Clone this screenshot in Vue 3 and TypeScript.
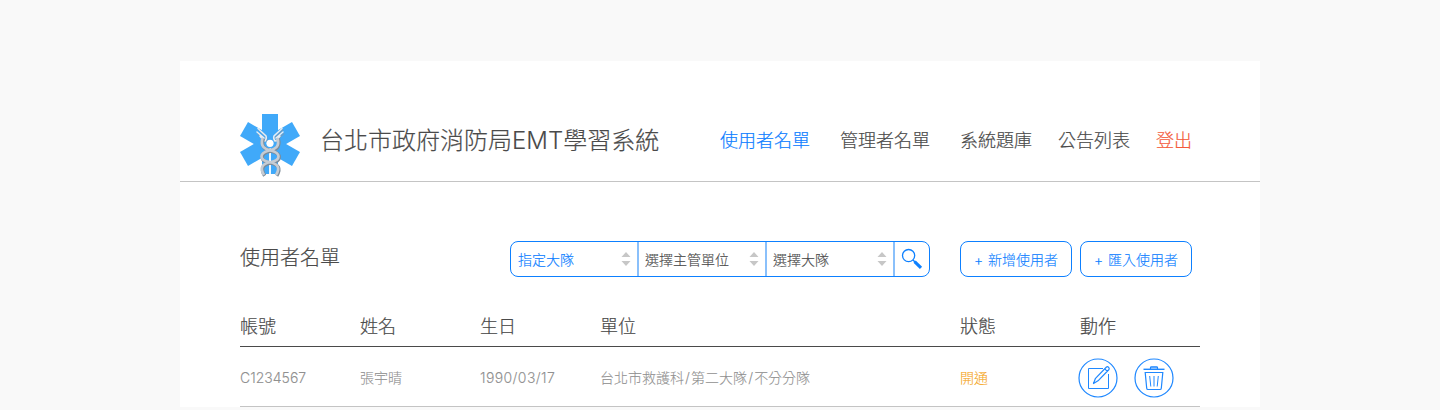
<script setup lang="ts">
interface NavItem { label: string; tone?: 'active' | 'danger' }
interface User { account: string; name: string; birthday: string; unit: string[]; status: string }

const navItems: NavItem[] = [
  { label: '使用者名單', tone: 'active' },
  { label: '管理者名單' },
  { label: '系統題庫' },
  { label: '公告列表' },
  { label: '登出', tone: 'danger' },
]
const filters = [
  { label: '指定大隊', active: true },
  { label: '選擇主管單位', active: false },
  { label: '選擇大隊', active: false },
]
const actions = ['新增使用者', '匯入使用者']
const columns = ['帳號', '姓名', '生日', '單位', '狀態', '動作']
const users: User[] = [
  { account: 'C1234567', name: '張宇晴', birthday: '1990/03/17', unit: ['台北市救護科', '第二大隊', '不分分隊'], status: '開通' },
]
</script>

<template>
  <main class="card">
    <header class="header">
      <svg class="logo" width="60" height="64" viewBox="0 0 60 64">
        <g fill="#40a9f9">
          <rect x="22" y="0" width="16" height="60" />
          <rect x="22" y="0" width="16" height="60" transform="rotate(60 30 30)" />
          <rect x="22" y="0" width="16" height="60" transform="rotate(-60 30 30)" />
        </g>
        <g fill="none" stroke-linecap="round">
          <g stroke="#6f9cc0" stroke-width="1.200" transform="translate(.8 .8)">
            <path d="M18 15L26 23V27M42 15L34 23V27M17 19L25 26M43 19L35 26" />
          </g>
          <g stroke="#e9edf2" stroke-width="1.500">
            <path d="M18 14.500L26 22Q27 24 25 27M17 18L24 24M20 22L24 27" />
            <path d="M42 14.500L34 22Q33 24 35 27M43 18L36 24M40 22L36 27" />
          </g>
          <path d="M30 35V60" stroke="#fff" stroke-width="1.800" />
          <g stroke="#7c8b98" stroke-width="3.500" stroke-linecap="butt" transform="translate(.7 .7)">
            <path d="M22.500 24C20 33 25 35 31 36.500C41 39 41 46 31 48C22 49.500 19.500 54 24 61" />
            <path d="M37.500 24C40 33 35 35 29 36.500C19 39 19 46 29 48C38 49.500 40.500 54 36 61" />
          </g>
          <g stroke="#c5ccd4" stroke-width="2.700" stroke-linecap="butt">
            <path d="M37.500 24C40 33 35 35 29 36.500C19 39 19 46 29 48C38 49.500 40.500 54 36 61" />
            <path d="M22.500 24C20 33 25 35 31 36.500C41 39 41 46 31 48C22 49.500 19.500 54 24 61" />
          </g>
        </g>
        <circle cx="30" cy="29.300" r="3.600" fill="#fff" />
      </svg>
      <h1 class="brand">台北市政府消防局<span class="latin">EMT</span>學習系統</h1>
      <nav class="nav">
        <a v-for="item in navItems" :key="item.label" :class="item.tone">{{ item.label }}</a>
      </nav>
    </header>

    <section class="content">
      <div class="toolbar">
        <h2>使用者名單</h2>
        <div class="filters">
          <div v-for="f in filters" :key="f.label" class="select" :class="{ active: f.active }">
            <span>{{ f.label }}</span>
            <svg width="10" height="14" viewBox="0 0 10 14" fill="#c7c7c7"><path d="M.5 5L5 0L9.500 5ZM.5 9H9.500L5 14Z" /></svg>
          </div>
          <button class="search" aria-label="搜尋">
            <svg width="22" height="22" viewBox="0 0 22 22" fill="none" stroke="#0d80ff">
              <circle cx="7.600" cy="7.600" r="6.100" stroke-width="1.300" />
              <path d="M12 12L14 14" stroke-width="1.500" /><path d="M13.600 13.600L20 19.800" stroke-width="3.200" />
            </svg>
          </button>
        </div>
        <div class="actions">
          <button v-for="a in actions" :key="a" class="action"><span class="plus">+</span>{{ a }}</button>
        </div>
      </div>

      <div class="row head"><span v-for="c in columns" :key="c">{{ c }}</span></div>
      <div v-for="u in users" :key="u.account" class="row body">
        <span>{{ u.account }}</span>
        <span>{{ u.name }}</span>
        <span class="date">{{ u.birthday }}</span>
        <span><template v-for="(part, i) in u.unit" :key="part"><span v-if="i" class="slash">/</span>{{ part }}</template></span>
        <span class="status">{{ u.status }}</span>
        <div class="icons">
          <svg width="40" height="40" viewBox="0 0 40 40" fill="none" stroke="#1f88ff">
            <circle cx="20" cy="20" r="19" stroke-width="1.200" />
            <path d="M25 10.500H10.500V30.500H30.500V16" />
            <path d="M15.500 25.500L17.500 20.300L28.500 9Q29.500 8.300 30.500 9.200Q31.700 10.300 31 11.500L20 22.800ZM26.800 10.800L29.300 13.300" stroke-linejoin="round" stroke-width="1.200" />
          </svg>
          <svg width="40" height="40" viewBox="0 0 40 40" fill="none" stroke="#1f88ff">
            <circle cx="20" cy="20" r="19" stroke-width="1.200" />
            <path d="M9.500 11.300H30.500" stroke-width="1.400" />
            <path d="M16.500 11V9.500Q16.500 8.800 17.500 8.800H22.500Q23.500 8.800 23.500 9.500V11" stroke-width="1.200" fill="#8abffb" />
            <path d="M11.200 14.500H28.800L27.300 30.200Q27.200 31.500 26 31.500H14Q12.800 31.500 12.700 30.200Z" stroke-width="1.200" />
            <path d="M15.700 18L16.800 28.500M20 18V28.500M24.300 18L23.200 28.500" />
          </svg>
        </div>
      </div>
    </section>
  </main>
</template>

<style>
body {
  margin: 0;
  background: #f9f9f9;
}
</style>

<style scoped>
.card {
  box-sizing: border-box;
  width: 1080px;
  height: 346px;
  margin: 61px auto 0;
  background: #fff;
  color: #4a4a4a;
  font-family: Inter, "Noto Sans CJK TC", sans-serif;
  font-weight: 300;
  -webkit-text-stroke: 0.2px currentColor;
}
.latin { -webkit-text-stroke: 0.1px currentColor; }
.header {
  box-sizing: border-box;
  display: flex;
  align-items: flex-start;
  height: 121px;
  padding: 53px 0 0 60px;
  border-bottom: 1px solid #c4c4c4;
}
.logo { flex: none; }
.brand {
  flex: none;
  width: 400px;
  margin: 9px 0 0 20px;
  font-size: 24px;
  font-weight: 300;
  line-height: 36px;
}
.nav {
  display: grid;
  grid-template-columns: 120px 120px 98px 98px auto;
  margin-top: 14px;
  font-size: 18px;
  line-height: 26px;
  white-space: nowrap;
}
.nav .active { color: #0d80ff; }
.nav .danger { color: #f4593a; }
.content { padding: 59px 60px 0; }
.toolbar {
  display: flex;
  height: 36px;
}
.toolbar h2 {
  width: 270px;
  margin: 0;
  font-size: 20px;
  font-weight: 300;
  line-height: 34px;
}
.filters {
  box-sizing: border-box;
  display: flex;
  width: 420px;
  border: 1px solid #0d80ff;
  border-radius: 8px;
}
.select {
  box-sizing: border-box;
  display: flex;
  align-items: center;
  justify-content: space-between;
  width: 128px;
  padding: 0 6px;
  border-right: 2px solid #8ac0fb;
  font-size: 14px;
  line-height: 34px;
  -webkit-text-stroke: 0.15px currentColor;
}
.select.active { padding-left: 7px; color: #0d80ff; }
.select span { padding-top: 2px; }
button {
  margin: 0;
  padding: 0;
  border: 0;
  background: none;
  font: inherit;
}
.search {
  display: flex;
  flex: 1;
  align-items: center;
  justify-content: center;
}
.actions {
  display: flex;
  gap: 8px;
  margin-left: 30px;
}
.action {
  box-sizing: border-box;
  width: 112px;
  padding-top: 2px;
  border: 1px solid #0d80ff;
  border-radius: 8px;
  color: #0d80ff;
  font-size: 14px;
  line-height: 32px;
  white-space: nowrap;
  -webkit-text-stroke: 0.12px currentColor;
}
.plus { margin-right: 5px; }
.row {
  display: grid;
  grid-template-columns: 120px 120px 120px 360px 120px 120px;
}
.head {
  height: 39px;
  margin-top: 30px;
  border-bottom: 1px solid #4a4a4a;
  font-size: 18px;
  line-height: 40px;
}
.body {
  height: 59px;
  border-bottom: 1px solid #c4c4c4;
  color: #909090;
  font-size: 14px;
  line-height: 62px;
  -webkit-text-stroke: 0.1px currentColor;
}
.date { letter-spacing: 0.4px; }
.slash { padding: 0 1.1px; }
.status { color: #f5a623; }
.icons {
  display: flex;
  gap: 16px;
  margin: 11px 0 0 -2px;
}
</style>
